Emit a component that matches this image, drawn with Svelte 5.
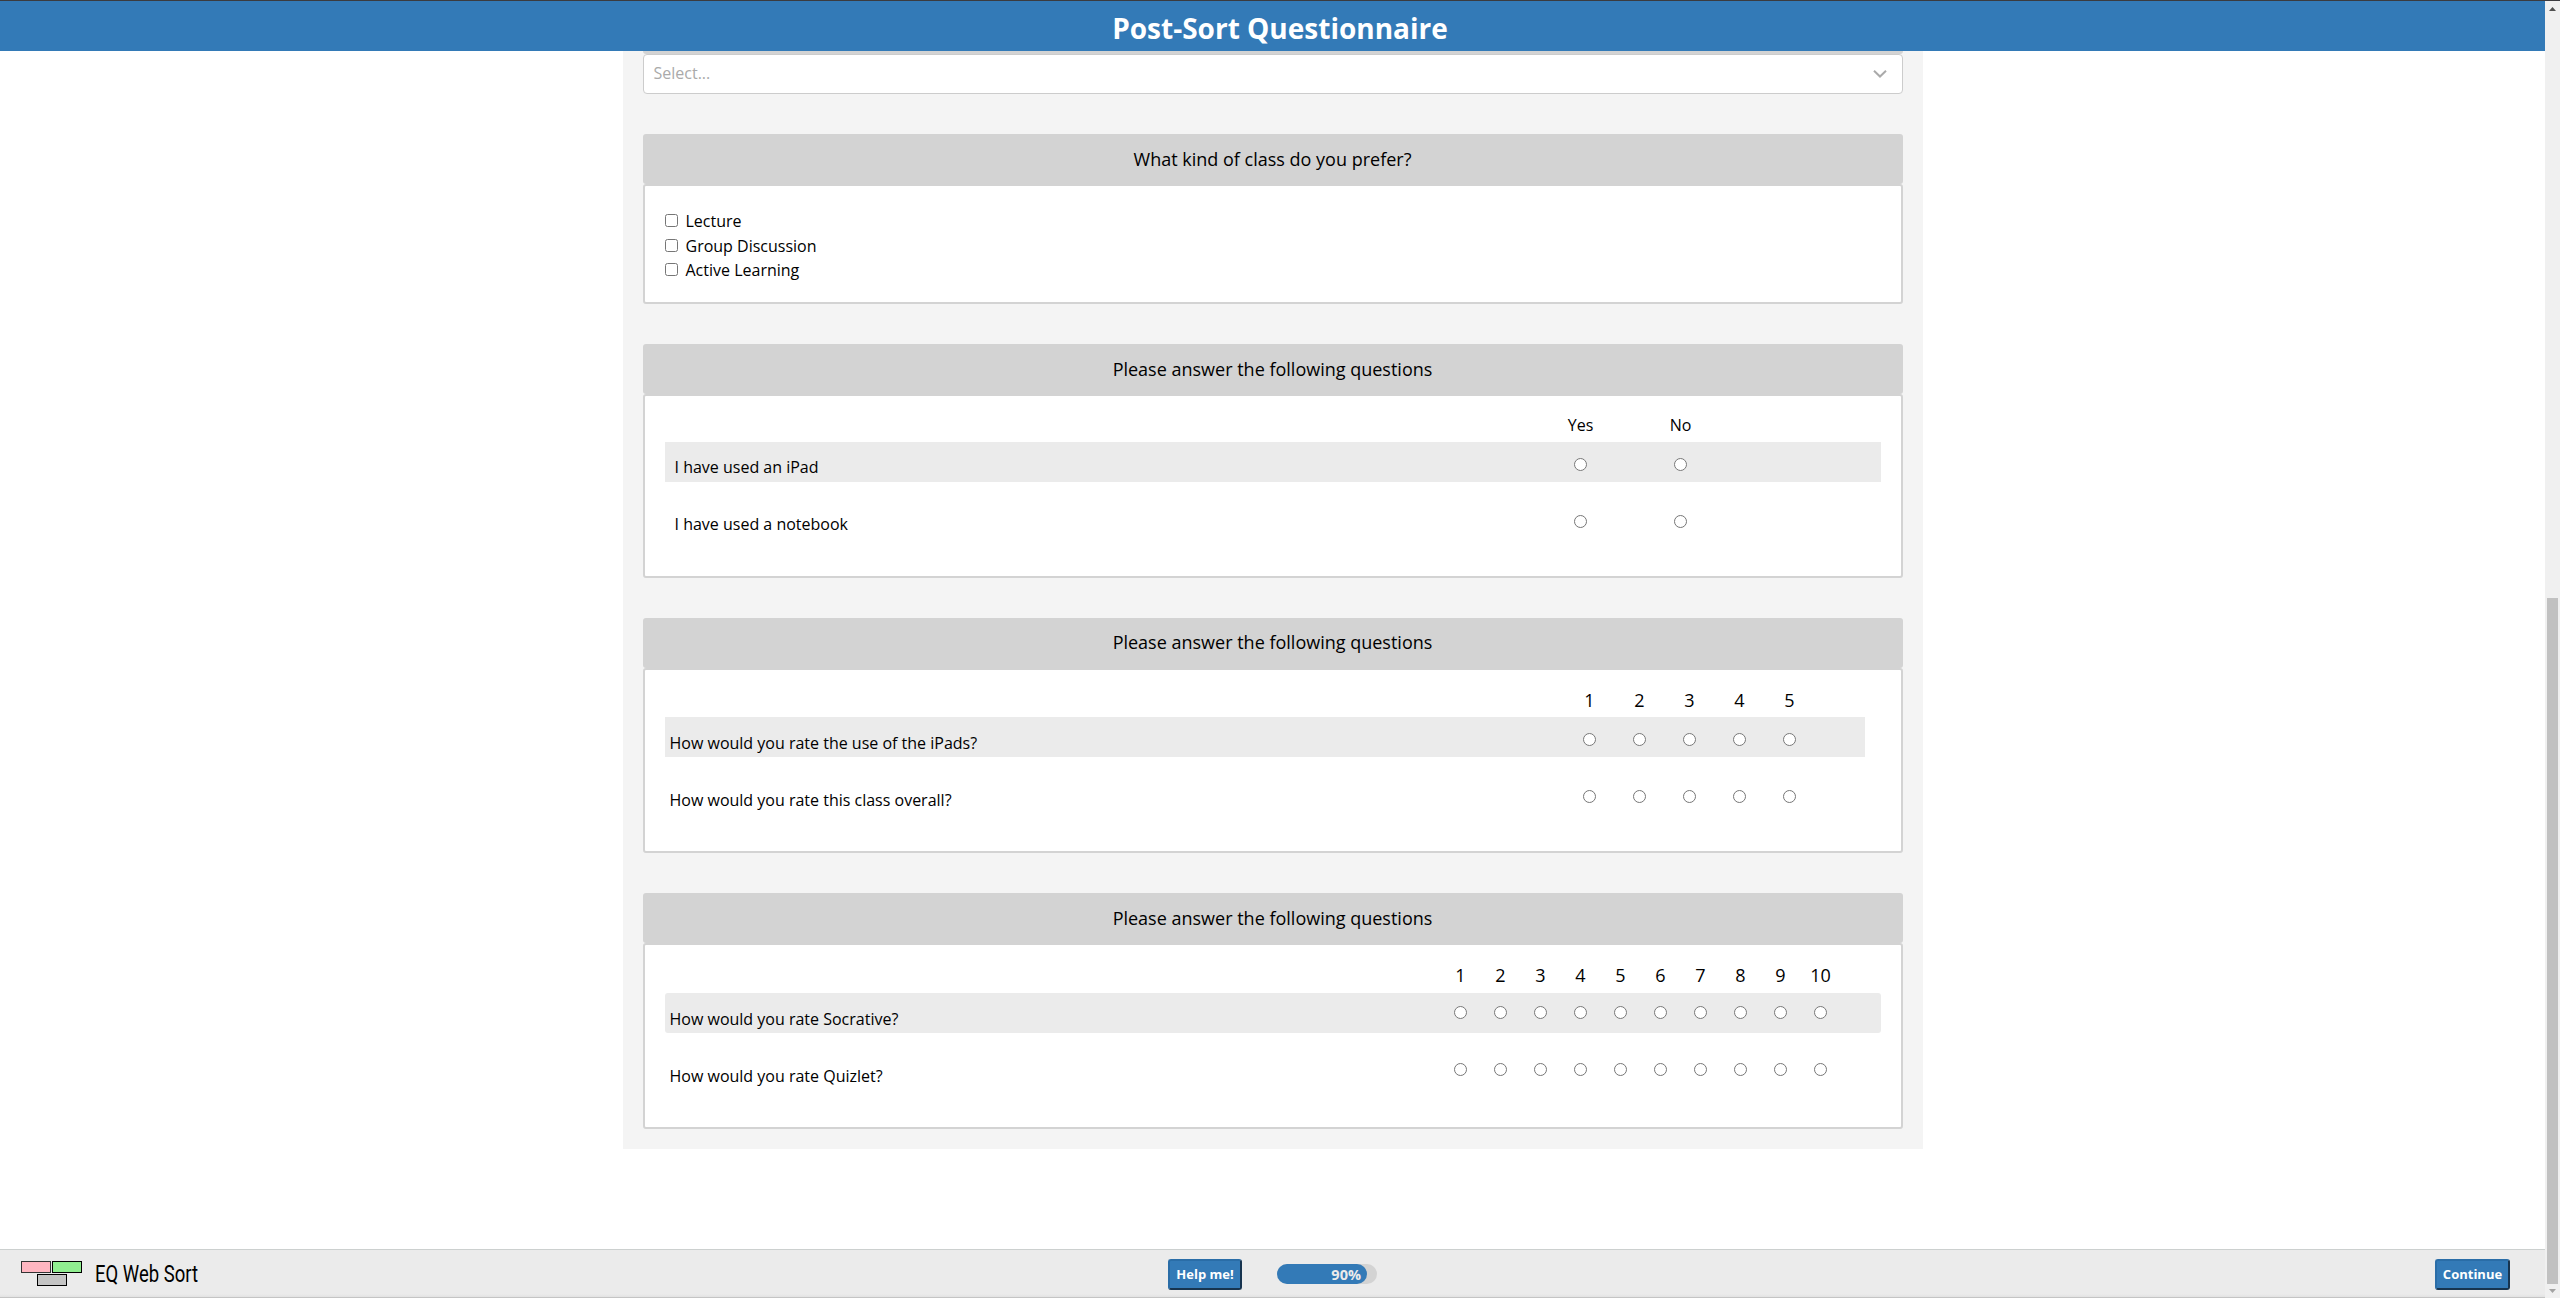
<script>
  const cards = [
    {
      kind: 'yesno',
      cols: ['Yes', 'No'],
      rows: ['I have used an iPad', 'I have used a notebook']
    },
    {
      kind: 'five',
      cols: ['1', '2', '3', '4', '5'],
      rows: ['How would you rate the use of the iPads?', 'How would you rate this class overall?']
    },
    {
      kind: 'ten',
      cols: ['1', '2', '3', '4', '5', '6', '7', '8', '9', '10'],
      rows: ['How would you rate Socrative?', 'How would you rate Quizlet?']
    }
  ];
  const classes = ['Lecture', 'Group Discussion', 'Active Learning'];
  const progress = 90;
</script>

<div class="page">
  <div class="view">
    <header><h1>Post-Sort Questionnaire</h1></header>
    <main>
      <div class="panel">
        <div class="stub"></div>
        <div class="select">
          <span>Select...</span>
          <svg width="16" height="10" viewBox="0 0 16 10">
            <path d="M2 1.700L8 7.500L14 1.700" fill="none" stroke="#aaa" stroke-width="2" />
          </svg>
        </div>

        <section>
          <h2>What kind of class do you prefer?</h2>
          <div class="body checks">
            {#each classes as c}
              <label><input type="checkbox" /><span>{c}</span></label>
            {/each}
          </div>
        </section>

        {#each cards as card, i}
          <section>
            <h2 class="{card.kind}-title">Please answer the following questions</h2>
            <div class="body {card.kind}">
              <div class="row head">
                <div class="opts">
                  {#each card.cols as c}<span class="cell">{c}</span>{/each}
                </div>
              </div>
              {#each card.rows as r, j}
                <div class="row item">
                  <span class="q">{r}</span>
                  <div class="opts">
                    {#each card.cols as c}
                      <span class="cell"><input type="radio" name="g{i}-{j}" value={c} /></span>
                    {/each}
                  </div>
                </div>
              {/each}
            </div>
          </section>
        {/each}
      </div>
    </main>
    <footer>
      <div class="brand">
        <svg width="62" height="26" viewBox="0 0 62 26">
          <rect x="0.5" y="0.5" width="29" height="11" fill="#ffb6c1" stroke="#333" />
          <rect x="31.5" y="0.5" width="29" height="11" fill="#90ee90" stroke="#000" />
          <rect x="16.5" y="13.5" width="29" height="11" fill="#c4c4c4" stroke="#000" />
        </svg>
        <span class="name">EQ Web Sort</span>
      </div>
      <button class="help">Help me!</button>
      <div class="track"><div class="fill" style="width: {progress}%">{progress}%</div></div>
      <button class="next">Continue</button>
    </footer>
  </div>
  <aside>
    <svg width="15" height="16" viewBox="0 0 15 16"><path d="M4 10h7L7.500 6z" fill="#505050" /></svg>
    <div class="thumb"></div>
    <svg width="15" height="14" viewBox="0 0 15 14"><path d="M4 5h7L7.500 9z" fill="#a3a3a3" /></svg>
  </aside>
</div>

<style>
  :global(body) {
    overflow: hidden;
  }
  .page {
    display: flex;
    box-sizing: border-box;
    width: 2560px;
    height: 1298px;
    border-top: 1px solid #3b3b3f;
    font: 16px/24px 'Open Sans', sans-serif;
    color: #000;
    background: #fff;
  }
  .view {
    display: flex;
    flex-direction: column;
    width: 2545px;
  }
  header {
    height: 50px;
    flex: none;
    background: #337ab7;
    color: #fff;
    text-align: center;
  }
  h1 {
    margin: 0;
    padding-left: 15px;
    font-size: 28px;
    line-height: 54px;
    font-weight: 700;
  }
  main {
    flex: 1;
    display: flex;
    justify-content: center;
    align-items: flex-start;
    padding-left: 1px;
  }
  .panel {
    box-sizing: border-box;
    width: 1300px;
    height: 1098px;
    padding: 0 20px;
    background: #f4f4f4;
  }
  .stub {
    height: 3px;
    background: #d3d3d3;
    border-radius: 0 0 3px 3px;
  }
  .select {
    display: flex;
    align-items: center;
    justify-content: space-between;
    box-sizing: border-box;
    height: 40px;
    padding: 0 14px 2px 9.500px;
    border: 1px solid #ccc;
    border-radius: 4px;
    background: #fff;
    color: #aaa;
  }
  .select svg {
    margin-top: 2px;
  }
  section {
    margin-top: 40px;
  }
  h2 {
    margin: 0;
    height: 50px;
    padding-right: 1px;
    border-radius: 3px;
    background: #d3d3d3;
    text-align: center;
    font-size: 18px;
    font-weight: 400;
    line-height: 51px;
  }
  .five-title {
    line-height: 49px;
  }
  .body {
    box-sizing: border-box;
    border: 2px solid #d3d3d3;
    border-radius: 3px;
    background: #fff;
    padding: 0 20px;
  }
  .checks {
    height: 120px;
    padding-top: 22px;
  }
  .checks label {
    display: flex;
    align-items: center;
    height: 24px;
  }
  .checks label:first-child {
    height: 25px;
  }
  .checks span {
    margin-left: 7.500px;
    padding-top: 1px;
  }
  input {
    display: block;
    width: 13px;
    height: 13px;
    margin: 0;
  }
  .row {
    display: flex;
    justify-content: flex-end;
  }
  .opts {
    display: flex;
  }
  .cell {
    display: flex;
    justify-content: center;
  }
  .q {
    flex: 1;
    padding: 13px 0 0 9.500px;
  }
  .item {
    height: 40px;
    margin-bottom: 17px;
  }
  .item:nth-child(2) {
    background: #ebebeb;
  }
  .item .cell {
    padding-top: 16px;
  }
  .yesno {
    height: 184px;
  }
  .yesno .head {
    box-sizing: border-box;
    height: 46px;
    padding-top: 17px;
  }
  .yesno .cell {
    width: 100px;
  }
  .yesno .opts {
    margin-right: 151px;
  }
  .five {
    height: 185px;
    padding-right: 36px;
  }
  .five .head,
  .ten .head {
    box-sizing: border-box;
    height: 47px;
    padding-top: 18px;
    font-size: 18px;
  }
  .five .cell {
    width: 50px;
  }
  .five .opts {
    margin-right: 51px;
  }
  .five .q,
  .ten .q {
    padding: 14px 0 0 4.500px;
  }
  .ten {
    height: 186px;
  }
  .ten .head {
    height: 48px;
  }
  .ten .cell {
    width: 40px;
  }
  .ten .opts {
    margin-right: 41px;
  }
  .yesno .head .opts {
    margin-right: 150.500px;
  }
  .five .head .opts {
    margin-right: 50.500px;
  }
  .ten .head .opts {
    margin-right: 40.500px;
  }
  .ten .item .cell {
    padding-top: 13px;
  }
  .ten .item {
    border-radius: 3px;
  }
  footer {
    display: flex;
    align-items: center;
    box-sizing: border-box;
    height: 49px;
    padding: 0 35px 0 21px;
    border-top: 1px solid #ccd0cf;
    background: linear-gradient(#ebebeb 44px, #e2e2e2 47px, #c4c4c4 47px);
  }
  .brand {
    display: flex;
    width: 1147px;
  }
  .name {
    width: 104px;
    margin-left: 12px;
    font-family: Roboto, sans-serif;
    font-size: 24px;
    line-height: 26px;
    white-space: nowrap;
    transform: scaleX(0.77);
    transform-origin: 0 0;
  }
  button {
    box-sizing: border-box;
    height: 31px;
    margin: 0;
    padding: 0;
    border: 2px solid;
    border-color: #2a6da7 #17344f #17344f #2a6da7;
    border-radius: 3px;
    background: #337ab7;
    color: #fff;
    font: 700 13px 'Open Sans', sans-serif;
  }
  .help {
    width: 74px;
  }
  .next {
    width: 75px;
    margin-left: auto;
  }
  .track {
    width: 100px;
    height: 20px;
    margin-left: 35px;
    border-radius: 10px;
    background: #d3d3d3;
  }
  .fill {
    box-sizing: border-box;
    height: 20px;
    padding-right: 6px;
    border-radius: 10px;
    background: #337ab7;
    color: #ebebeb;
    font-size: 14.500px;
    font-weight: 700;
    line-height: 22px;
    text-align: right;
  }
  aside {
    display: flex;
    flex-direction: column;
    width: 15px;
    background: #f0f0f0;
  }
  aside svg {
    display: block;
  }
  .thumb {
    width: 11px;
    height: 686px;
    margin: auto 2px 0;
    background: #c1c1c1;
  }
</style>
